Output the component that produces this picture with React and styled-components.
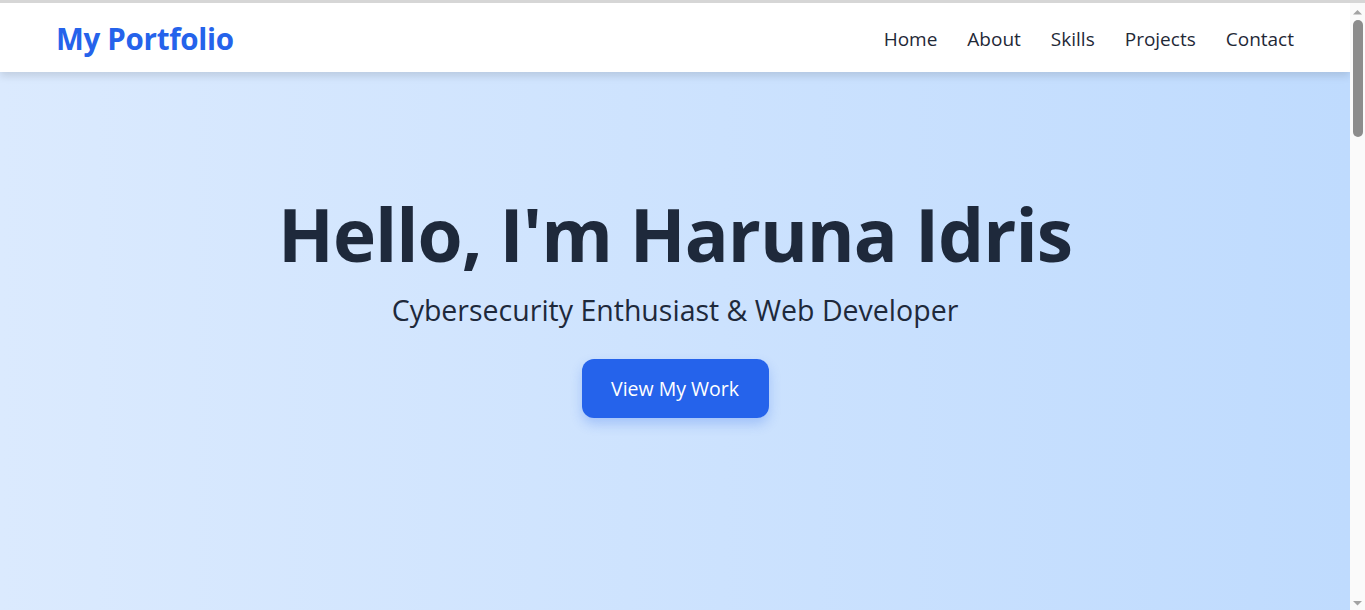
import React from 'react'
import styled, { createGlobalStyle } from 'styled-components'

const GlobalStyle = createGlobalStyle`
  * {
    box-sizing: border-box;
  }
  html, body {
    margin: 0;
    padding: 0;
  }
  body {
    font-family: 'Open Sans', 'Noto Sans', sans-serif;
    color: #1f2937;
    background: #fafafa;
  }
`

const links = ['Home', 'About', 'Skills', 'Projects', 'Contact']

export default function App() {
  return (
    <>
      <GlobalStyle />
      <Frame>
        <Page>
          <Header>
            <Logo href="#home">My Portfolio</Logo>
            <Nav>
              {links.map((link) => (
                <NavLink key={link} href={`#${link.toLowerCase()}`}>
                  {link}
                </NavLink>
              ))}
            </Nav>
          </Header>

          <Hero id="home">
            <Title>Hello, I'm Haruna Idris</Title>
            <SubTitle>Cybersecurity Enthusiast &amp; Web Developer</SubTitle>
            <CtaButton href="#projects">View My Work</CtaButton>
          </Hero>
        </Page>

        {/* window scrollbar, as the browser draws it */}
        <ScrollRail>
          <svg width="15" height="14" viewBox="0 0 15 14">
            <polygon points="7.5,7 12,11.5 3,11.5" fill="#a3a3a3" />
          </svg>
          <Thumb />
          <svg width="15" height="12" viewBox="0 0 15 12">
            <polygon points="3,3 12,3 7.5,7.5" fill="#a3a3a3" />
          </svg>
        </ScrollRail>
      </Frame>
    </>
  )
}

const Frame = styled.div`
  height: 100vh;
  display: flex;
  border-top: 3px solid #d6d6d6;
`

const Page = styled.div`
  flex: 1;
  min-width: 0;
  display: flex;
  flex-direction: column;
  overflow: hidden;
`

const ScrollRail = styled.aside`
  width: 15px;
  flex-shrink: 0;
  display: flex;
  flex-direction: column;
  justify-content: space-between;
  background: #fafafa;
`

const Thumb = styled.div`
  width: 10px;
  height: 117px;
  margin: 3px 0 auto 3px;
  border-radius: 5px;
  background: #8c8c8c;
`

const Header = styled.header`
  position: relative;
  z-index: 1;
  height: 69px;
  flex-shrink: 0;
  display: flex;
  align-items: center;
  justify-content: space-between;
  padding: 2px 56px 0;
  background: #fff;
  box-shadow: 0 4px 8px rgba(0, 0, 0, 0.12);
`

const Logo = styled.a`
  font-size: 29.5px;
  font-weight: 700;
  color: #2563eb;
  text-decoration: none;
  letter-spacing: -0.3px;
`

const Nav = styled.nav`
  display: flex;
  gap: 30px;
`

const NavLink = styled.a`
  font-size: 19px;
  color: #1f2937;
  text-decoration: none;
`

const Hero = styled.section`
  flex: 1;
  display: flex;
  flex-direction: column;
  align-items: center;
  padding-top: 118px;
  background: linear-gradient(to right, #dbeafe, #bfdbfe);
`

const Title = styled.h1`
  margin: 0;
  font-size: 73px;
  line-height: 1.2;
  font-weight: 700;
  color: #1e293b;
  letter-spacing: -1px;
`

const SubTitle = styled.p`
  margin: 14px 0 0;
  font-size: 28.5px;
  line-height: 1.3;
  color: #1e293b;
`

const CtaButton = styled.a`
  margin-top: 30px;
  display: inline-flex;
  align-items: center;
  justify-content: center;
  width: 187px;
  height: 59px;
  border-radius: 12px;
  background: #2563eb;
  color: #fff;
  font-size: 19.5px;
  text-decoration: none;
  box-shadow: 0 6px 12px rgba(37, 99, 235, 0.25);
`
